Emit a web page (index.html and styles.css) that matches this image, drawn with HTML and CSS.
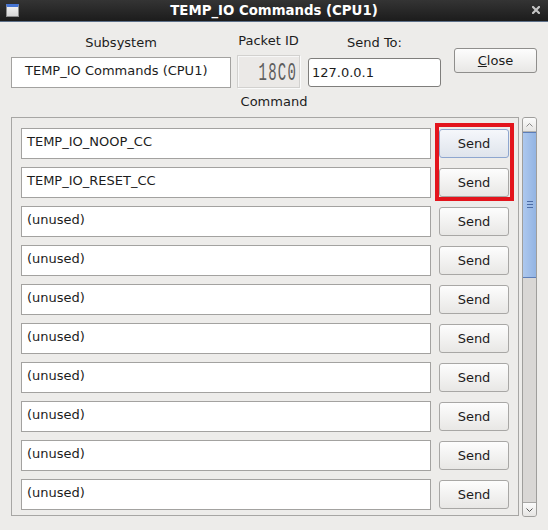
FILE: index.html
```html
<!DOCTYPE html>
<html>
<head>
<meta charset="utf-8">
<title>TEMP_IO Commands (CPU1)</title>
<link rel="stylesheet" href="styles.css">
</head>
<body>
<div class="window">
  <div class="titlebar">
    <div class="win-icon"></div>
    <div class="title">TEMP_IO Commands (CPU1)</div>
    <svg class="close-x" width="8" height="8" viewBox="0 0 8 8"><path d="M1 1L7 7M7 1L1 7" stroke="#c4c4c4" stroke-width="2.2" stroke-linecap="square"/></svg>
  </div>
  <div class="content">
    <div class="top">
      <div class="col col-sub">
        <div class="label">Subsystem</div>
        <div class="field sub-field">TEMP_IO Commands (CPU1)</div>
      </div>
      <div class="col col-pkt">
        <div class="label">Packet ID</div>
        <div class="lcd"><span class="lcd-text">18C0</span></div>
      </div>
      <div class="col col-to">
        <div class="label">Send To:</div>
        <div class="field to-field">127.0.0.1</div>
      </div>
      <div class="col col-close">
        <button class="btn close-btn"><u>C</u>lose</button>
      </div>
    </div>
    <div class="cmd-label">Command</div>
    <div class="cmd-area">
      <div class="frame">
        <div class="rows">
          <div class="row"><div class="field row-field">TEMP_IO_NOOP_CC</div><button class="btn send-btn focus">Send</button></div>
          <div class="row"><div class="field row-field">TEMP_IO_RESET_CC</div><button class="btn send-btn">Send</button></div>
          <div class="row"><div class="field row-field">(unused)</div><button class="btn send-btn">Send</button></div>
          <div class="row"><div class="field row-field">(unused)</div><button class="btn send-btn">Send</button></div>
          <div class="row"><div class="field row-field">(unused)</div><button class="btn send-btn">Send</button></div>
          <div class="row"><div class="field row-field">(unused)</div><button class="btn send-btn">Send</button></div>
          <div class="row"><div class="field row-field">(unused)</div><button class="btn send-btn">Send</button></div>
          <div class="row"><div class="field row-field">(unused)</div><button class="btn send-btn">Send</button></div>
          <div class="row"><div class="field row-field">(unused)</div><button class="btn send-btn">Send</button></div>
          <div class="row"><div class="field row-field">(unused)</div><button class="btn send-btn">Send</button></div>
        </div>
        <div class="highlight"></div>
      </div>
      <div class="scrollbar">
        <div class="sb-btn sb-up"><svg width="7" height="4" viewBox="0 0 7 4"><path d="M0.5 3.5L3.5 0.5L6.5 3.5" fill="none" stroke="#8a8a8a" stroke-width="1"/></svg></div>
        <div class="sb-thumb"><div class="grip"></div><div class="grip"></div><div class="grip"></div></div>
        <div class="sb-track"></div>
        <div class="sb-btn sb-down"><svg width="7" height="4" viewBox="0 0 7 4"><path d="M0.5 0.5L3.5 3.5L6.5 0.5" fill="none" stroke="#555" stroke-width="1"/></svg></div>
      </div>
    </div>
  </div>
</div>
</body>
</html>
```

FILE: styles.css
```css
* { box-sizing: border-box; }
html, body {
  margin: 0;
  padding: 0;
}
body {
  width: 548px;
  height: 530px;
  overflow: hidden;
  background: #edecea;
  font-family: "DejaVu Sans", "Noto Sans", sans-serif;
  font-size: 13px;
  color: #1c1c1c;
}
.window {
  width: 548px;
  height: 530px;
  background: #edecea;
}
.titlebar {
  height: 22px;
  display: grid;
  grid-template-columns: 1fr auto 1fr;
  align-items: center;
  background: linear-gradient(#343434, #1c1c1c);
  border-bottom: 1px solid #5d7089;
}
.win-icon {
  justify-self: start;
  margin-left: 6px;
  margin-top: -1px;
  width: 13px;
  height: 13px;
  background: linear-gradient(#f0f0f0, #d6d6d6);
  border: 1px solid #8d8d8d;
  border-top: 3px solid #4574d4;
}
.title {
  color: #ffffff;
  font-weight: bold;
  font-size: 13.3px;
  line-height: 21px;
  white-space: nowrap;
}
.close-x {
  justify-self: end;
  margin-right: 8px;
  margin-top: -1px;
}
.content {
  padding: 0 11px;
}
.top {
  display: flex;
  align-items: flex-start;
}
.col {
  display: flex;
  flex-direction: column;
}
.label {
  line-height: 16px;
  text-align: center;
  white-space: nowrap;
}
.field {
  background: #ffffff;
  border: 1px solid #a3a2a0;
  white-space: nowrap;
  overflow: hidden;
}
.col-sub { width: 220px; }
.col-sub .label { margin-top: 13px; }
.sub-field {
  margin-top: 6px;
  height: 31px;
  padding: 5px 0 0 13px;
  line-height: 16px;
}
.col-pkt { width: 63px; margin-left: 6px; }
.col-pkt .label { margin-top: 11px; }
.lcd {
  margin-top: 6px;
  height: 33px;
  border: 1px solid #d2d1cf;
  box-shadow: inset 1px 1px 0 #f7f7f7, 1px 1px 0 #fafafa;
  background: #ebe9e7;
  display: flex;
  justify-content: flex-end;
  align-items: center;
  padding-right: 2px;
  overflow: hidden;
}
.lcd-text {
  display: inline-block;
  font-family: "Liberation Mono", "DejaVu Sans Mono", monospace;
  font-size: 14px;
  line-height: 14px;
  color: #5e5e5e;
  transform: scaleY(1.9);
  letter-spacing: 1.2px;
  margin-top: 1px;
}
.col-to { width: 133px; margin-left: 8px; }
.col-to .label { margin-top: 13px; }
.to-field {
  margin-top: 7px;
  height: 29px;
  border: 1px solid #7f7e7c;
  border-radius: 3px;
  padding-left: 3px;
  line-height: 27px;
}
.col-close { width: 83px; margin-left: 13px; }
.btn {
  font-family: "DejaVu Sans", "Noto Sans", sans-serif;
  font-size: 13px;
  color: #1c1c1c;
  border: 1px solid #a8a7a5;
  border-radius: 3px;
  background: linear-gradient(#fdfdfd, #e8e7e5);
  padding: 0;
  text-align: center;
}
.close-btn {
  margin-top: 26px;
  height: 25px;
  width: 83px;
  line-height: 23px;
  border-color: #8f8e8c;
}
.cmd-label {
  margin-top: 6px;
  line-height: 16px;
  text-align: center;
}
.cmd-area {
  margin-top: 7px;
  display: flex;
  align-items: flex-start;
}
.frame {
  position: relative;
  width: 509px;
  height: 399px;
  border: 1px solid #a7a6a4;
  padding: 10px 8px 0 9px;
  overflow: hidden;
}
.rows {
  display: flex;
  flex-direction: column;
  gap: 8px;
}
.row {
  display: flex;
  align-items: center;
  gap: 8px;
}
.row-field {
  width: 410px;
  height: 31px;
  padding: 5px 0 0 5px;
  line-height: 16px;
}
.send-btn {
  width: 70px;
  height: 29px;
  line-height: 27px;
}
.send-btn.focus {
  border-color: #8ea6cf;
  background: linear-gradient(#f5f7fb, #dfe4ec);
}
.highlight {
  position: absolute;
  left: 423px;
  top: 5px;
  width: 79px;
  height: 78px;
  border: 4px solid #e3141c;
}
.scrollbar {
  margin-left: 3px;
  width: 15px;
  height: 400px;
  border: 1px solid #9f9e9c;
  border-radius: 3px;
  display: flex;
  flex-direction: column;
  overflow: hidden;
  background: #d9d7d5;
}
.sb-btn {
  height: 13px;
  flex: none;
  display: flex;
  align-items: center;
  justify-content: center;
  background: linear-gradient(#fbfbfb, #e6e5e3);
}
.sb-up { border-bottom: 1px solid #b5b4b2; height: 14px; }
.sb-down { border-top: 1px solid #a8a7a5; height: 14px; }
.sb-thumb {
  flex: none;
  height: 146px;
  margin: 0 -1px;
  border: 1px solid #5c7db8;
  background: linear-gradient(to right, #adc8ee, #93b4e3);
  display: flex;
  flex-direction: column;
  align-items: center;
  justify-content: flex-start;
  padding-top: 68px;
  gap: 2px;
}
.grip {
  width: 6px;
  height: 1px;
  background: #4c6ca6;
}
.sb-track {
  flex: 1;
  background: #d9d7d5;
}
```
